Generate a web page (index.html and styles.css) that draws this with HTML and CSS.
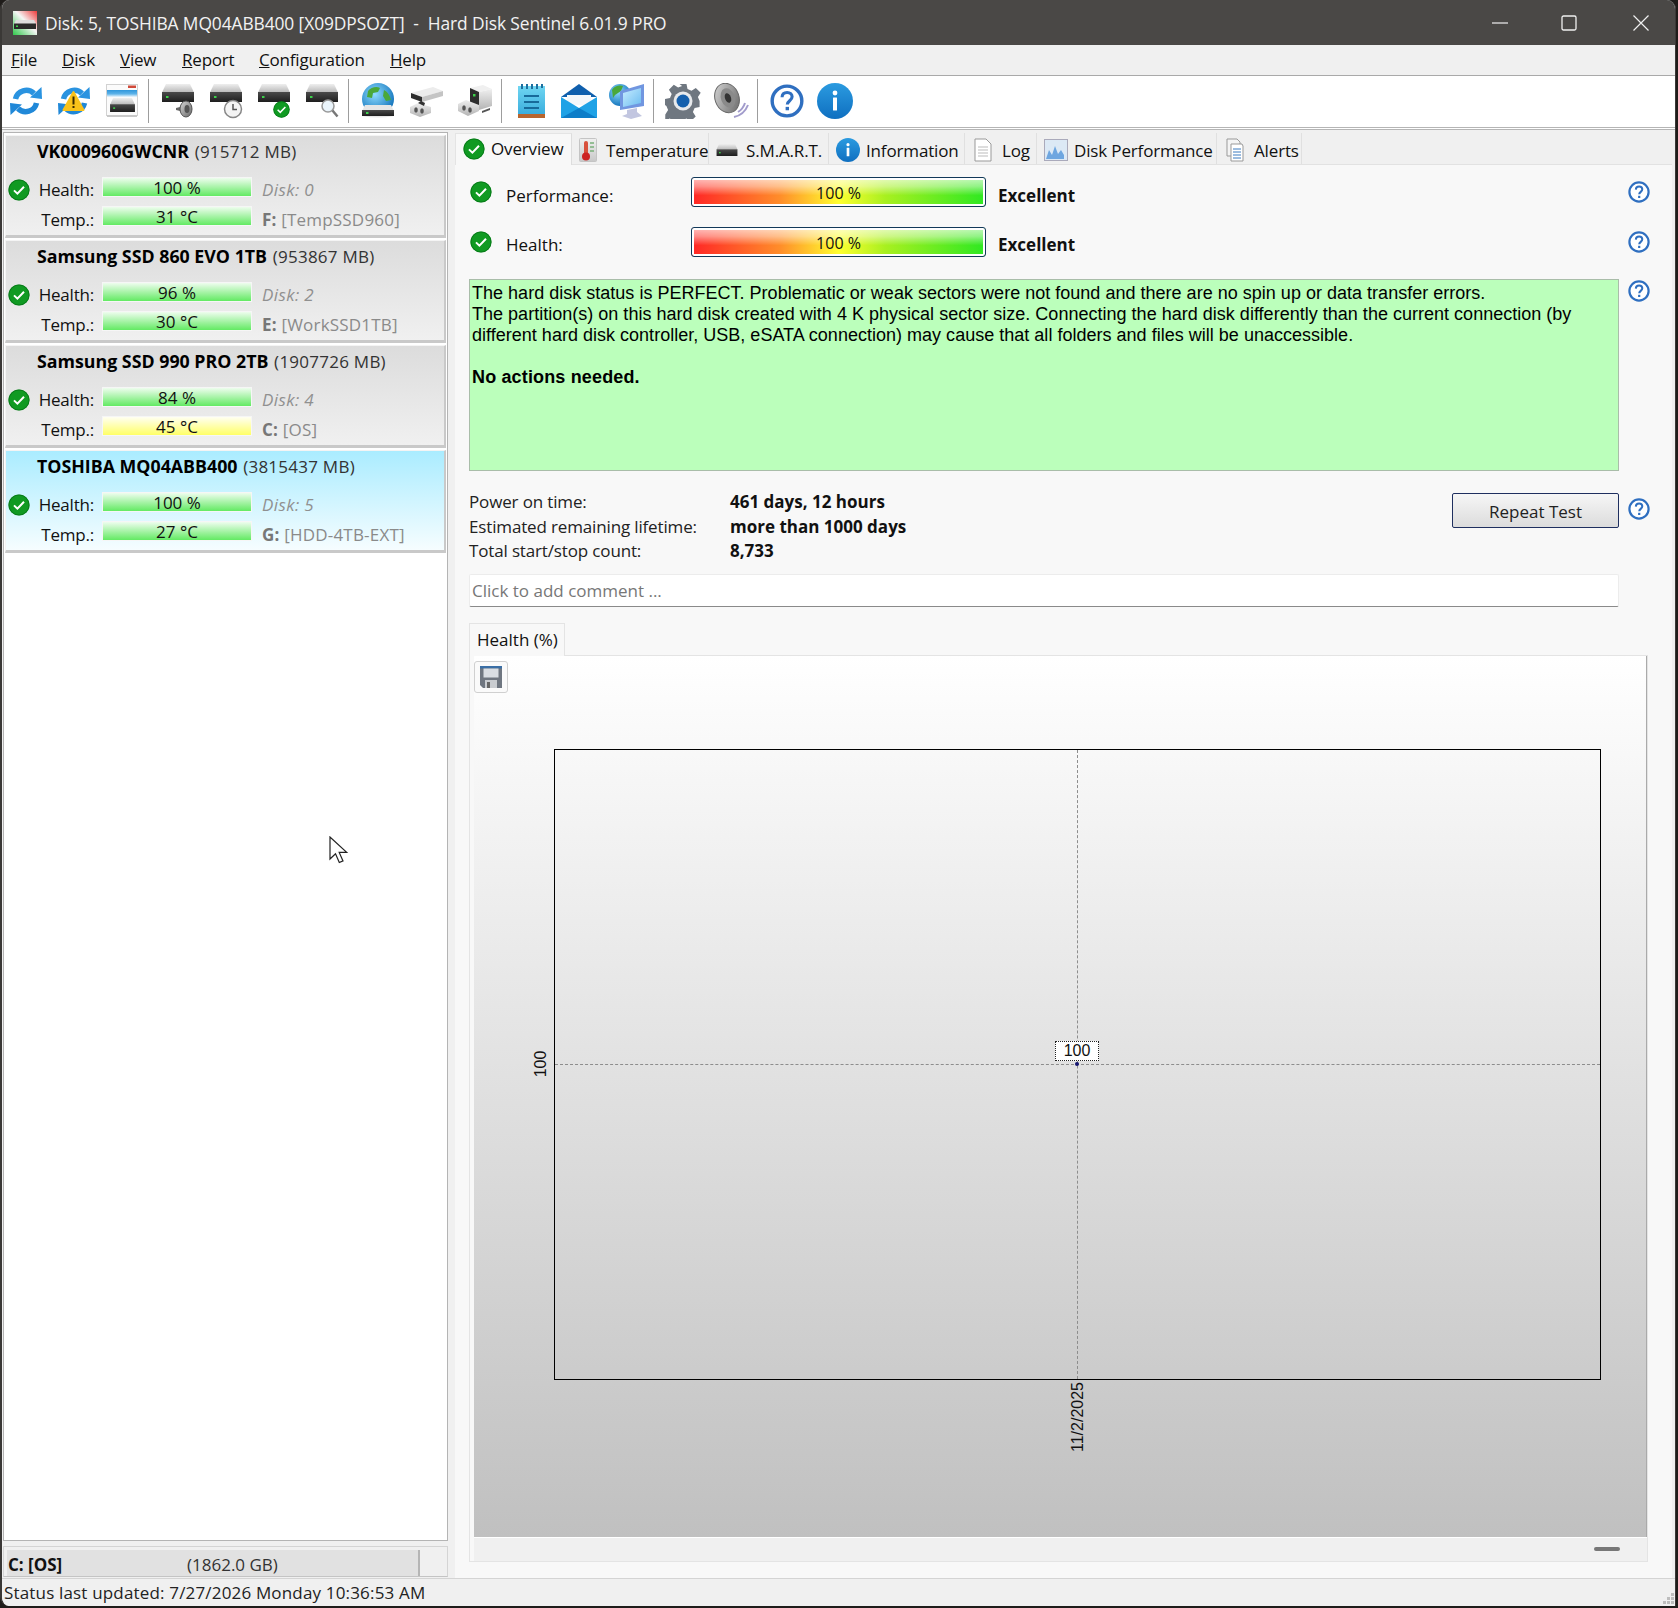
FILE: index.html
```html
<!DOCTYPE html>
<html lang="en">
<head>
<meta charset="utf-8">
<title>Hard Disk Sentinel</title>
<link rel="stylesheet" href="styles.css">
</head>
<body>
<svg class="defs" aria-hidden="true">
  <defs>
    <linearGradient id="gDriveTop" x1="0" y1="0" x2="0" y2="1"><stop offset="0" stop-color="#efefef"/><stop offset="1" stop-color="#b8b8b8"/></linearGradient>
    <linearGradient id="gDriveBar" x1="0" y1="0" x2="0" y2="1"><stop offset="0" stop-color="#4a4a4a"/><stop offset="1" stop-color="#1e1e1e"/></linearGradient>
    <linearGradient id="gBlue" x1="0" y1="0" x2="0" y2="1"><stop offset="0" stop-color="#2b9be0"/><stop offset="1" stop-color="#0f6fc0"/></linearGradient>
    <linearGradient id="gNote" x1="0" y1="0" x2="0" y2="1"><stop offset="0" stop-color="#6fd6f2"/><stop offset="1" stop-color="#35a9db"/></linearGradient>
    <linearGradient id="gSpk" x1="0" y1="0" x2="1" y2="1"><stop offset="0" stop-color="#d8d8d8"/><stop offset="1" stop-color="#666"/></linearGradient>
    <linearGradient id="gBlock" x1="0" y1="0" x2="0" y2="1"><stop offset="0" stop-color="#efefef"/><stop offset="1" stop-color="#b4b4b4"/></linearGradient>
    <linearGradient id="gHead" x1="0" y1="0" x2="0" y2="1"><stop offset="0" stop-color="#2f97dc"/><stop offset=".55" stop-color="#5cb2e8"/><stop offset="1" stop-color="#f0f8fd"/></linearGradient>
    <linearGradient id="gScreen" x1="0" y1="0" x2="1" y2="1"><stop offset="0" stop-color="#c6ecff"/><stop offset="1" stop-color="#6cbcf0"/></linearGradient>
    <linearGradient id="gPage" x1="0" y1="0" x2="0" y2="1"><stop offset="0" stop-color="#f0f0f0"/><stop offset="1" stop-color="#c8c8c8"/></linearGradient>
    <radialGradient id="gGlobe" cx=".4" cy=".35" r=".7"><stop offset="0" stop-color="#8fdcff"/><stop offset="1" stop-color="#0d6fb8"/></radialGradient>

    <symbol id="ok" viewBox="0 0 22 22">
      <circle cx="11" cy="11" r="10.600" fill="#0a8a1a"/>
      <circle cx="11" cy="11" r="10" fill="#109a22" stroke="#06701a" stroke-width=".6"/>
      <path d="M6 11.400l3.400 3.300L16 7.800" fill="none" stroke="#fff" stroke-width="2"/>
    </symbol>
    <symbol id="help" viewBox="0 0 22 22">
      <circle cx="11" cy="11" r="9.600" fill="#fff" stroke="#2f6fc0" stroke-width="2.200"/>
      <path d="M7.800 8.600c.1-2 1.500-3.100 3.300-3.100 1.900 0 3.200 1.200 3.200 2.800 0 2.500-3.100 2.600-3.100 5" fill="none" stroke="#2f6fc0" stroke-width="2"/>
      <rect x="10.100" y="14.800" width="2.200" height="2.200" fill="#2f6fc0"/>
    </symbol>
    <symbol id="info" viewBox="0 0 36 36">
      <circle cx="18" cy="18" r="18" fill="url(#gBlue)"/>
      <rect x="16" y="14.500" width="4" height="13" rx=".5" fill="#fff"/>
      <circle cx="18" cy="10" r="2.400" fill="#fff"/>
    </symbol>
    <symbol id="drive" viewBox="0 0 32 18">
      <path d="M4 0h24l4 8.500H0z" fill="url(#gDriveTop)"/>
      <rect x="0" y="8" width="32" height="10" fill="url(#gDriveBar)"/>
      <rect x="4" y="12" width="2.500" height="2" fill="#3cd04a"/>
    </symbol>
    <symbol id="refresh" viewBox="0 0 32 32">
      <path d="M5.500 14A11 11 0 0 1 24 8.500" fill="none" stroke="#2a93e0" stroke-width="5.500"/>
      <path d="M20 12.500 32 14 31.500 2z" fill="#2a93e0"/>
      <path d="M26.500 18A11 11 0 0 1 8 23.500" fill="none" stroke="#2088d8" stroke-width="5.500"/>
      <path d="M12 19.500 0 18 .5 30z" fill="#2088d8"/>
    </symbol>
  </defs>
</svg>

<div class="window">
  <header class="titlebar">
    <svg class="appicon" viewBox="0 0 24 24">
      <defs>
        <linearGradient id="gApp" x1="1" y1="0" x2="0" y2="1"><stop offset="0" stop-color="#ef3a3a"/><stop offset=".45" stop-color="#f5f5f5"/><stop offset="1" stop-color="#2fc84a"/></linearGradient>
      </defs>
      <rect width="24" height="24" fill="url(#gApp)"/>
      <path d="M3 9h18l2 4H1z" fill="#ddd"/>
      <rect x="1" y="12.500" width="22" height="5.500" fill="#2a2a2a"/>
      <rect x="3" y="14.500" width="2" height="1.500" fill="#3cd04a"/>
    </svg>
    <span class="title">Disk: 5, TOSHIBA MQ04ABB400 [X09DPSOZT]&nbsp; -&nbsp; Hard Disk Sentinel 6.01.9 PRO</span>
    <div class="winctl">
      <svg class="ctl" viewBox="0 0 16 16"><path d="M0 8h16" stroke="#f0f0f0" stroke-width="1.200"/></svg>
      <svg class="ctl" viewBox="0 0 16 16"><rect x="1" y="1" width="14" height="14" rx="1.500" fill="none" stroke="#f0f0f0" stroke-width="1.300"/></svg>
      <svg class="ctl" viewBox="0 0 16 16"><path d="M.5.500l15 15M15.500.500l-15 15" stroke="#f0f0f0" stroke-width="1.200"/></svg>
    </div>
  </header>

  <nav class="menubar">
    <span class="menu m1"><u>F</u>ile</span>
    <span class="menu m2"><u>D</u>isk</span>
    <span class="menu m3"><u>V</u>iew</span>
    <span class="menu m4"><u>R</u>eport</span>
    <span class="menu m5"><u>C</u>onfiguration</span>
    <span class="menu m6"><u>H</u>elp</span>
  </nav>

  <div class="toolbar">
    <div class="tbi"><svg class="s32" viewBox="0 0 32 32"><use href="#refresh"/></svg></div>
    <div class="tbi"><svg class="s32" viewBox="0 0 32 32"><use href="#refresh"/><path d="M15.500 7 25.500 25H5.500z" fill="#f9c21a" stroke="#f9c21a" stroke-width="2" stroke-linejoin="round"/><rect x="14.500" y="11.500" width="2" height="8" fill="#3a2a00"/><rect x="14.500" y="21" width="2" height="2" fill="#3a2a00"/></svg></div>
    <div class="tbi"><svg class="s36" viewBox="0 0 36 36"><rect x="2.500" y="1.500" width="31" height="31" fill="#fbfbfb" stroke="#d2d2d2"/><path d="M3 32h30v2H3z" fill="#c8c8c8"/><rect x="3" y="7" width="30" height="7" fill="url(#gHead)"/><rect x="24" y="2.500" width="8" height="2.500" fill="#d04a3a"/><use href="#drive" x="6" y="15" width="25" height="14"/></svg></div>
    <i class="tbsep"></i>
    <div class="tbi"><svg class="s36" viewBox="0 0 36 36"><use href="#drive" x="2" y="1" width="32" height="18"/><path d="M16 25l4-1 5-6v16l-5-6-4-1z" fill="#666"/><ellipse cx="26" cy="26" rx="6" ry="8" fill="url(#gSpk)" stroke="#555"/><ellipse cx="27" cy="26" rx="2.500" ry="4" fill="#555"/></svg></div>
    <div class="tbi"><svg class="s36" viewBox="0 0 36 36"><use href="#drive" x="2" y="1" width="32" height="18"/><circle cx="25" cy="26" r="8.500" fill="#f4f4f4" stroke="#888" stroke-width="1.500"/><path d="M25 21v5.500h4" fill="none" stroke="#555" stroke-width="1.500"/></svg></div>
    <div class="tbi"><svg class="s36" viewBox="0 0 36 36"><use href="#drive" x="2" y="1" width="32" height="18"/><use href="#ok" x="17" y="18" width="17" height="17"/></svg></div>
    <div class="tbi"><svg class="s36" viewBox="0 0 36 36"><use href="#drive" x="2" y="1" width="32" height="18"/><circle cx="24" cy="23" r="6" fill="#eaf4fb" stroke="#999" stroke-width="1.500"/><path d="M28.500 27.500l5 6" stroke="#777" stroke-width="2.500"/></svg></div>
    <i class="tbsep"></i>
    <div class="tbi"><svg class="s36" viewBox="0 0 36 36"><circle cx="18" cy="16" r="16" fill="url(#gGlobe)"/><path d="M8 8c3-4 9-5 12-3l-2 4-5 1-1 5-5-1zM24 7c4 2 6 6 7 10l-5 1-3-5z" fill="#4aa83a"/><path d="M5 22h26l3 6v5q-16 3-32 0v-5z" fill="#e6e6e6"/><rect x="2" y="27" width="32" height="6" fill="url(#gDriveBar)"/><rect x="6" y="29" width="2.500" height="2" fill="#3cd04a"/></svg></div>
    <div class="tbi"><svg class="s36 dev" viewBox="0 0 36 36"><path d="M3 10 25 4l10 4-21 6z" fill="#ececec"/><path d="M14 14l21-6v5l-21 6z" fill="#c4c4c4"/><path d="M3 10l11 4v5L3 15z" fill="#2d2d2d"/><path d="M2 24l8-4 13 4v6l-11 4-10-4z" fill="url(#gBlock)"/><path d="M10 20l3-2 4 2-1 3z" fill="#333"/><ellipse cx="8" cy="27" rx="1.800" ry="2.800" fill="#555"/><ellipse cx="14" cy="28" rx="1.800" ry="2.800" fill="#555"/></svg></div>
    <div class="tbi"><svg class="s36 dev" viewBox="0 0 36 36"><path d="M14 5 27 2l9 4-13 3z" fill="#f0f0f0"/><path d="M23 9l13-3v17l-13 4z" fill="url(#gBlock)"/><path d="M14 5l9 4v15l-9-4z" fill="#2d2d2d"/><rect x="17" y="11" width="2.500" height="2.500" fill="#3cd04a"/><path d="M26 28l8-3v2l-8 3z" fill="#555"/><path d="M2 21l8-4 13 5v6l-11 5-10-5z" fill="url(#gBlock)"/><ellipse cx="8" cy="25" rx="1.800" ry="2.800" fill="#555"/><ellipse cx="14" cy="27" rx="1.800" ry="2.800" fill="#555"/></svg></div>
    <i class="tbsep tbsep-w"></i>
    <div class="tbi"><svg class="s36" viewBox="0 0 36 36"><rect x="5" y="3" width="27" height="31" fill="url(#gNote)"/><rect x="5" y="31" width="27" height="4" fill="#b8652e"/><path d="M9 1v5M14 1v5M19 1v5M24 1v5M29 1v4" stroke="#1d6f9f" stroke-width="2"/><path d="M11 13h15M11 19h15M11 25h15" stroke="#176a9a" stroke-width="2"/></svg></div>
    <div class="tbi"><svg class="s36" viewBox="0 0 36 36"><path d="M0 14 18 1l18 13z" fill="#0f5fad"/><path d="M6 12h24v10H6z" fill="#f4f7fa"/><path d="M0 14l18 11 18-11v21H0z" fill="#1fa2e6"/><path d="M0 35l18-10 18 10z" fill="#0d7dc8"/></svg></div>
    <div class="tbi"><svg class="s36" viewBox="0 0 36 36"><circle cx="11" cy="12" r="11" fill="url(#gGlobe)"/><path d="M3 7c3-5 9-5 11-4l-2 5-6 4-2 3z" fill="#4aa83a"/><path d="M11 8 35 1v22l-24 4z" fill="#7196e0"/><path d="M14 10l18-5v15l-18 4z" fill="url(#gScreen)"/><path d="M18 27l10-2v4l5 4-11 3-9-3 5-2z" fill="#c2c6e0"/></svg></div>
    <i class="tbsep"></i>
    <div class="tbi"><svg class="s36" viewBox="0 0 36 36"><path d="M14.500 1h7l1 5 4 1.700 4.300-2.800 4.900 4.900-2.800 4.300 1.700 4 0 0v6l-5 1-1.700 4 2.800 4.300-4.900 4.900-4.300-2.800-4 1.700-1 5h-7l-1-5-4-1.700-4.300 2.800L.3 31.400l2.800-4.300-1.700-4L0 22v-6l5-1 1.700-4-2.800-4.300 4.900-4.900 4.300 2.800 4-1.700z" fill="#6f7780"/><circle cx="18" cy="18" r="9.500" fill="#e8eaec"/><circle cx="18" cy="18" r="6.500" fill="#1560ad"/></svg></div>
    <div class="tbi"><svg class="s36" viewBox="0 0 36 36"><ellipse cx="14" cy="15" rx="12" ry="15" fill="url(#gSpk)" stroke="#666" transform="rotate(-20 14 15)"/><ellipse cx="15" cy="15" rx="7" ry="10" fill="#8a8a8a" transform="rotate(-20 15 15)"/><ellipse cx="15" cy="15" rx="3" ry="5" fill="#333" transform="rotate(-20 15 15)"/><path d="M25 29q5-3 7-9M21 34q10-2 14-12" fill="none" stroke="#a29ccc" stroke-width="2"/></svg></div>
    <i class="tbsep"></i>
    <div class="tbi"><svg class="s34" viewBox="0 0 22 22"><use href="#help"/></svg></div>
    <div class="tbi"><svg class="s36" viewBox="0 0 36 36"><use href="#info"/></svg></div>
  </div>

  <main class="body">
    <section class="left">
      <div class="disklist">
        <article class="card">
          <div class="cname"><b>VK000960GWCNR</b> (915712 MB)</div>
          <svg class="cok"><use href="#ok"/></svg>
          <span class="clabel">Health:</span><div class="cbar good">100 %</div><span class="cside"><em>Disk: 0</em></span>
          <span class="clabel">Temp.:</span><div class="cbar good">31 °C</div><span class="cside"><b>F:</b> [TempSSD960]</span>
        </article>
        <article class="card">
          <div class="cname"><b>Samsung SSD 860 EVO 1TB</b> (953867 MB)</div>
          <svg class="cok"><use href="#ok"/></svg>
          <span class="clabel">Health:</span><div class="cbar good">96 %</div><span class="cside"><em>Disk: 2</em></span>
          <span class="clabel">Temp.:</span><div class="cbar good">30 °C</div><span class="cside"><b>E:</b> [WorkSSD1TB]</span>
        </article>
        <article class="card">
          <div class="cname"><b>Samsung SSD 990 PRO 2TB</b> (1907726 MB)</div>
          <svg class="cok"><use href="#ok"/></svg>
          <span class="clabel">Health:</span><div class="cbar good">84 %</div><span class="cside"><em>Disk: 4</em></span>
          <span class="clabel">Temp.:</span><div class="cbar warm">45 °C</div><span class="cside"><b>C:</b> [OS]</span>
        </article>
        <article class="card selected">
          <div class="cname"><b>TOSHIBA MQ04ABB400</b> (3815437 MB)</div>
          <svg class="cok"><use href="#ok"/></svg>
          <span class="clabel">Health:</span><div class="cbar good">100 %</div><span class="cside"><em>Disk: 5</em></span>
          <span class="clabel">Temp.:</span><div class="cbar good">27 °C</div><span class="cside"><b>G:</b> [HDD-4TB-EXT]</span>
        </article>
        <svg class="cursor" viewBox="0 0 20 28"><path d="M1 1v22l5.500-5.200 3.800 8.700 3.700-1.600-3.800-8.500h7.500z" fill="#fff" stroke="#222" stroke-width="1.200"/></svg>
      </div>
      <div class="volbar">
        <div class="volfill"><b class="volname">C: [OS]</b><span>(1862.0 GB)</span></div>
      </div>
    </section>

    <section class="right">
      <div class="tabs">
        <div class="tab active"><svg class="tabico ti-ok"><use href="#ok"/></svg>Overview</div>
        <div class="tab"><svg class="tabico ti-t" viewBox="0 0 18 24"><rect x=".5" y=".5" width="17" height="23" rx="1" fill="url(#gPage)" stroke="#c4c4c4"/><rect x="5" y="3" width="4" height="14" rx="2" fill="#d8503c"/><circle cx="7" cy="18.500" r="4" fill="#c22"/><path d="M11 5h4M11 9h4M11 13h4" stroke="#7ab07a" stroke-width="1.500"/></svg>Temperature</div>
        <div class="tab"><svg class="tabico ti-d" viewBox="0 0 32 18"><use href="#drive" width="32" height="18"/></svg>S.M.A.R.T.</div>
        <div class="tab"><svg class="tabico ti-i" viewBox="0 0 36 36"><use href="#info"/></svg>Information</div>
        <div class="tab"><svg class="tabico ti-p" viewBox="0 0 18 24"><path d="M1 1h11l5 5v17H1z" fill="#fff" stroke="#999"/><path d="M4 9h10M4 12h10M4 15h10M4 18h10" stroke="#bbb"/></svg>Log</div>
        <div class="tab"><svg class="tabico ti-g" viewBox="0 0 24 22"><rect x=".5" y=".5" width="23" height="21" fill="#dce9f5" stroke="#aab"/><path d="M2 20l3-9 3 5 3-9 3 8 3-4 3 5v4z" fill="#6ea6e0"/></svg>Disk Performance</div>
        <div class="tab"><svg class="tabico ti-p" viewBox="0 0 18 24"><path d="M1 1h10l3 3v14H1z" fill="#f4f4f4" stroke="#999"/><path d="M5 6h11l1 2v15H5z" fill="#fff" stroke="#999"/><path d="M7 11h8M7 14h8M7 17h8M7 20h8" stroke="#3a7ac0"/></svg>Alerts</div>
      </div>

      <div class="overview">
        <div class="orow score">
          <div class="omain scoreline">
            <svg class="sicon"><use href="#ok"/></svg><span class="slabel">Performance:</span>
            <div class="meter">100 %</div><b class="sval">Excellent</b>
          </div>
          <svg class="helpi"><use href="#help"/></svg>
        </div>
        <div class="orow score score2">
          <div class="omain scoreline">
            <svg class="sicon"><use href="#ok"/></svg><span class="slabel">Health:</span>
            <div class="meter">100 %</div><b class="sval">Excellent</b>
          </div>
          <svg class="helpi"><use href="#help"/></svg>
        </div>
        <div class="orow">
          <div class="omain status">
            <p>The hard disk status is PERFECT. Problematic or weak sectors were not found and there are no spin up or data transfer errors.<br>The partition(s) on this hard disk created with 4 K physical sector size. Connecting the hard disk differently than the current connection (by different hard disk controller, USB, eSATA connection) may cause that all folders and files will be unaccessible.</p>
            <p class="statusb">No actions needed.</p>
          </div>
          <svg class="helpi helptop"><use href="#help"/></svg>
        </div>
        <div class="orow facts">
          <div class="omain factsmain">
            <dl class="factlist">
              <dt>Power on time:</dt><dd>461 days, 12 hours</dd>
              <dt>Estimated remaining lifetime:</dt><dd>more than 1000 days</dd>
              <dt>Total start/stop count:</dt><dd>8,733</dd>
            </dl>
            <div class="btn">Repeat Test</div>
          </div>
          <svg class="helpi helpbtn"><use href="#help"/></svg>
        </div>
        <div class="comment">Click to add comment ...</div>
        <div class="charttab">Health (%)</div>
        <div class="chartbox">
          <div class="chart">
            <div class="savebtn"><svg class="floppy" viewBox="0 0 22 22"><path d="M0 0h22v22H3l-3-3z" fill="#6f7680"/><rect x="0" y="0" width="22" height="2.500" fill="#3a6ea5"/><rect x="3.500" y="2.500" width="15" height="9" fill="#d9dde2"/><rect x="5" y="14" width="12" height="8" fill="#c9ccd0"/><rect x="7" y="16" width="3" height="6" fill="#666"/></svg></div>
            <div class="plot">
              <i class="gh"></i><i class="gv"></i>
              <span class="ylab">100</span>
              <span class="pt-label">100</span>
              <i class="pt"></i>
              <span class="xlab">11/2/2025</span>
            </div>
          </div>
          <div class="chartfoot"><i class="dash"></i></div>
        </div>
      </div>
    </section>
  </main>

  <footer class="statusbar">
    Status last updated: 7/27/2026 Monday 10:36:53 AM
    <svg class="grip" viewBox="0 0 12 12"><path d="M9 0h3v3H9zM5 4h3v3H5zM9 4h3v3H9zM1 8h3v3H1zM5 8h3v3H5zM9 8h3v3H9z" fill="#bdbdbd"/></svg>
  </footer>
</div>
</body>
</html>
```
FILE: styles.css
```css
* { box-sizing: border-box; }
html, body { margin: 0; padding: 0; }
body {
  width: 1678px; height: 1608px; overflow: hidden;
  background: #1f1c1a;
  font-family: "Open Sans", "Noto Sans", sans-serif;
  font-size: 17px; color: #111;
}
.defs { position: absolute; width: 0; height: 0; }
.window {
  width: 1676px; height: 1606px;
  display: flex; flex-direction: column;
  border-left: 2px solid #3a3836;
  border-right: 1px solid #3a3836;
  border-radius: 9px 9px 0 9px;
  overflow: hidden;
  background: #f0f0f0;
}

/* title */
.titlebar { flex: 0 0 45px; background: #4a4846; display: flex; align-items: center; color: #f2f2f2; margin: 0 -1px 0 -2px; }
.appicon { width: 24px; height: 24px; margin-left: 13px; margin-right: 8px; }
.title { font-size: 17.400px; letter-spacing: -.1px; white-space: pre; }
.winctl { margin-left: auto; display: flex; align-items: center; gap: 53px; padding-right: 27px; }
.ctl { width: 16px; height: 16px; display: block; }
.ctl + .ctl + .ctl { margin-left: 3px; }

/* menu */
.menubar { flex: 0 0 31px; background: #f0f0f0; border-bottom: 1px solid #a9a9a9; display: flex; align-items: center; padding: 0 0 2px 9px; }
.menu { font-size: 17px; letter-spacing: -.2px; }
.m1 { width: 51px; } .m2 { width: 58px; } .m3 { width: 62px; } .m4 { width: 77px; } .m5 { width: 131px; }

/* toolbar */
.toolbar { flex: 0 0 54px; background: #fff; border-bottom: 3px double #b5b5b5; display: flex; align-items: center; padding-bottom: 1px; }
.tbi { flex: 0 0 48px; display: flex; justify-content: center; align-items: center; }
.s32 { width: 32px; height: 32px; overflow: visible; }
.s34 { width: 34px; height: 34px; }
.s36 { width: 36px; height: 36px; }
.tbsep { flex: 0 0 1px; height: 44px; background: #9d9d9d; margin: 0 5px 0 2px; }
.tbsep-w { margin: 0 5px 0 3px; }

/* body */
.body { flex: 1; display: flex; min-height: 0; }
.left { flex: 0 0 446px; display: flex; flex-direction: column; gap: 5px; padding: 2px 0 1px 1px; }
.disklist { position: relative; flex: 1; background: #fff; border: 1px solid #b4b4b4; padding: 2px 1px 0 1px; display: flex; flex-direction: column; gap: 2px; }
.cursor { position: absolute; left: 325px; top: 703px; width: 20px; height: 28px; }

.card {
  flex: 0 0 103px;
  display: grid;
  grid-template-columns: 31px 57px 150px 1fr;
  grid-template-rows: 40px 29px 30px;
  background: linear-gradient(#dcdcdc, #f0f0f0);
  border: 1px solid #f4f4f4; border-bottom: 3px solid #c9c9c9; border-right: 2px solid #c9c9c9;
}
.card.selected { background: linear-gradient(#aaecff, #f6fdff); }
.cname { grid-column: 1 / -1; padding: 3px 0 0 31px; white-space: nowrap; color: #333; line-height: 24px; letter-spacing: .25px; }
.cname b { color: #000; font-size: 17.800px; letter-spacing: 0; margin-right: 1px; }
.cok { grid-column: 1; grid-row: 2 / span 2; width: 22px; height: 22px; margin: 3px 0 0 2px; }
.clabel { text-align: right; line-height: 27px; letter-spacing: -.2px; }
.cbar { margin: 1px 0 0 8px; height: 20px; width: 150px; line-height: 20px; text-align: center; color: #111; }
.good { background: linear-gradient(#eefdee, #63ea63); border: 1px solid #f6f6f6; }
.warm { background: linear-gradient(#fffff2, #ffff66); border: 1px solid #f6f6f6; }
.cside { padding-left: 18px; color: #8a8a8a; line-height: 27px; white-space: nowrap; letter-spacing: .2px; }
.clabel:nth-child(6), .cside:nth-child(8) { padding-top: 1px; }
.cside em { color: #909090; letter-spacing: .4px; }
.cside b { color: #777; }

.volbar { flex: 0 0 30px; background: #f0f0f0; border: 1px solid #d4d4d4; border-bottom: 1px solid #c4c4c4; padding: 3px 27px 0 3px; }
.volfill { height: 26px; background: #e1e1e1; border-right: 2px solid #b5b5b5; display: flex; line-height: 30px; color: #333; }
.volname { width: 180px; padding-left: 1px; color: #111; }

/* right */
.right { flex: 1; min-width: 0; padding: 3px 3px 0 7px; display: flex; flex-direction: column; background: #f0f0f0; }
.tabs { flex: 0 0 31px; display: grid; grid-template-columns: 117px 137px 120px 136px 72px 180px 85px; justify-content: start; }
.tab { display: flex; align-items: center; padding: 3px 0 0 7px; gap: 7px; border-right: 1px solid #e0e0e0; white-space: nowrap; letter-spacing: -.15px; }
.tab.active { background: #f8f8f8; padding: 0 0 2px 7px; border-right: 1px solid #ddd; border-left: 1px solid #e4e4e4; border-top: 1px solid #e4e4e4; margin-bottom: -1px; z-index: 1; gap: 6px; }
.tabico { width: 22px; height: 22px; flex: none; }
.ti-t { width: 18px; height: 24px; margin-right: 2px; }
.ti-d { width: 22px; height: 12px; margin-right: 1px; }
.ti-i { width: 24px; height: 24px; margin-right: -1px; }
.ti-p { width: 18px; height: 24px; margin: 0 3px 0 2px; }
.ti-g { width: 24px; height: 22px; margin-right: -1px; }

.overview { flex: 1; background: #f8f8f8; border-top: 1px solid #e2e2e2; padding: 12px 0 0 14px; min-height: 0; }
.orow { display: flex; align-items: center; }
.omain { width: 1150px; flex: none; }
.helpi { width: 22px; height: 22px; margin-left: 9px; flex: none; }
.helptop { align-self: flex-start; margin-top: 1px; }
.helpbtn { align-self: flex-start; margin-top: 8px; }

.score { height: 30px; }
.score2 { margin-top: 20px; }
.scoreline { display: flex; align-items: center; height: 30px; }
.sicon { width: 22px; height: 22px; margin: 0 14px 0 1px; flex: none; }
.slabel { width: 185px; padding-top: 6px; }
.meter {
  width: 295px; height: 30px; border-radius: 3px; border: 1px solid #12395a;
  box-shadow: inset 0 0 0 2px #fff;
  text-align: center; line-height: 31px; font-size: 16px;
  background:
    linear-gradient(rgba(255,255,255,.7), rgba(255,255,255,.45) 30%, rgba(255,255,255,0) 62%),
    linear-gradient(90deg, #ff2626, #ff8d2a 30%, #ffff30 50%, #a8f020 66%, #2ee822);
}
.sval { margin-left: 12px; padding-top: 6px; }
.score2 .slabel, .score2 .sval { padding-top: 4px; }

.score + .score + .orow { margin-top: 22px; align-items: flex-start; }
.status {
  height: 192px; background: #bbffbb; border: 1px solid #a9bda9; padding: 3px 3px 0 2px;
  font-family: "Liberation Sans", Arial, sans-serif; font-size: 18px; line-height: 21px; color: #000; letter-spacing: .015px;
}
.status p { margin: 0; }
.status .statusb { margin-top: 21px; font-weight: 700; letter-spacing: .15px; }

.facts { margin-top: 19px; align-items: flex-start; }
.factsmain { display: flex; justify-content: space-between; align-items: flex-start; }
.factlist { margin: 0; display: grid; grid-template-columns: 261px auto; grid-auto-rows: 24.500px; line-height: 24.500px; }
.factlist dt { color: #222; letter-spacing: -.15px; }
.factlist dd { margin: 0; font-weight: 700; }
.btn { width: 167px; height: 35px; margin-top: 3px; border: 1px solid #1f2f5f; border-radius: 2px; background: linear-gradient(#f6f6f6, #dcdcdc); text-align: center; line-height: 35px; color: #222; }

.comment { width: 1150px; height: 33px; margin-top: 10px; background: #fff; border: 1px solid #ececec; border-bottom: 1px solid #8a8a8a; border-radius: 2px; padding-left: 2px; line-height: 32px; color: #777; }
.charttab { width: 96px; height: 33px; margin-top: 16px; background: #f8f8f8; border: 1px solid #e4e4e4; border-bottom: 0; padding-left: 7px; line-height: 32px; position: relative; z-index: 1; margin-bottom: -1px; }
.chartbox { width: 1179px; border: 1px solid #e4e4e4; padding: 0 0 0 4px; background: #f8f8f8; }
.chart { height: 881px; background: linear-gradient(#fff, #c0c0c0); border-right: 1px solid #aaa; padding-top: 5px; }
.savebtn { width: 34px; height: 32px; background: #fafafa; border: 1px solid #d0d0d0; border-radius: 3px; display: flex; align-items: center; justify-content: center; }
.floppy { width: 22px; height: 22px; }
.plot { position: relative; width: 1047px; height: 631px; margin: 56px 0 0 80px; border: 1px solid #000; font-family: "Liberation Sans", Arial, sans-serif; font-size: 16px; color: #111; }
.gh { position: absolute; left: 0; right: 0; top: 314px; border-top: 1px dashed #8d8d8d; }
.gv { position: absolute; top: 0; bottom: 0; left: 522px; border-left: 1px dashed #8d8d8d; }
.ylab { position: absolute; left: -14px; top: 314px; transform: translate(-50%, -50%) rotate(-90deg); }
.xlab { position: absolute; left: 523px; top: 667px; transform: translate(-50%, -50%) rotate(-90deg); white-space: nowrap; }
.pt-label { position: absolute; left: 500px; top: 291px; width: 44px; height: 20px; background: #fff; border: 1px dotted #222; text-align: center; line-height: 18px; }
.pt { position: absolute; left: 520px; top: 312px; width: 4px; height: 4px; border-radius: 50%; background: #14146e; }
.chartfoot { height: 24px; background: #f0f0f0; border-top: 1px solid #fff; position: relative; display: flex; justify-content: flex-end; align-items: center; padding-right: 27px; }
.dash { width: 26px; height: 4px; border-radius: 2px; background: #777; }

.statusbar { flex: 0 0 28px; position: relative; border-top: 1px solid #d4d4d4; padding-left: 2px; line-height: 27px; background: #f0f0f0; color: #222; letter-spacing: .17px; }
.grip { position: absolute; right: 1px; bottom: 1px; width: 12px; height: 12px; }
```
